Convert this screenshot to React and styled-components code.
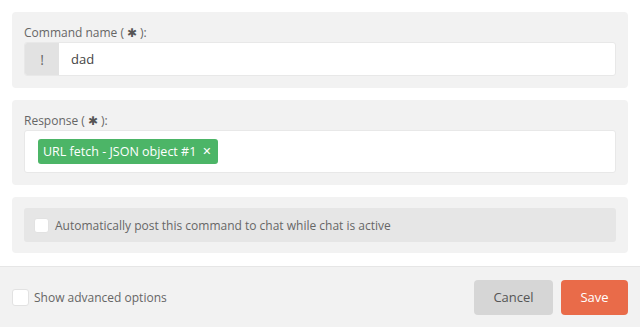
import React, {useState} from "react";
import styled, {createGlobalStyle} from "styled-components";

const GlobalStyle = createGlobalStyle`
  body {
    margin: 0;
    background: #fff;
    font-family: "Open Sans", "DejaVu Sans", sans-serif;
    color: #555;
  }
`;

const Page = styled.div`
  width: 640px;
  height: 327px;
  display: flex;
  flex-direction: column;
  overflow: hidden;
`;

const Body = styled.div`
  flex: 1;
  padding: 12px;
  display: flex;
  flex-direction: column;
  gap: 12px;
`;

const Panel = styled.div`
  background-color: #f2f2f2;
  border-radius: 4px;
  padding: ${props => props.tight ? "11px 12px" : "12px"};
`;

const Label = styled.div`
  font-size: 12px;
  line-height: 17px;
  color: #666;
`;

const Star = styled.span`
  font-family: "DejaVu Sans", sans-serif;
  font-size: 12px;
  font-weight: 700;
  color: #555;
  margin: 0 3px;
`;

const InputRow = styled.div`
  display: flex;
  height: 34px;
  background: #fff;
  border: 1px solid #e8e8e8;
  border-radius: 3px;
  box-sizing: border-box;
  overflow: hidden;
`;

const Prefix = styled.div`
  width: 34px;
  display: flex;
  align-items: center;
  justify-content: center;
  background: #e2e2e2;
  font-size: 14px;
  color: #666;
`;

const TextInput = styled.input`
  flex: 1;
  border: none;
  outline: none;
  padding: 0 12px;
  font-family: "Open Sans", sans-serif;
  font-size: 13px;
  color: #444;
  background: transparent;
`;

const TagBox = styled.div`
  height: 43px;
  box-sizing: border-box;
  background: #fff;
  border: 1px solid #e8e8e8;
  border-radius: 3px;
  padding: 8px 13px;
  display: flex;
  align-items: center;
`;

const Tag = styled.span`
  display: inline-flex;
  align-items: center;
  gap: 6px;
  height: 25px;
  padding: 0 6px 0 5px;
  border-radius: 3px;
  background: #4cb567;
  color: #fff;
  font-size: 12.5px;
`;

const TagClose = styled.span`
  font-family: "DejaVu Sans", sans-serif;
  font-size: 11px;
  font-weight: 700;
`;

const CheckRow = styled.label`
  display: flex;
  align-items: center;
  gap: 6px;
  height: 34px;
  padding: 0 10px;
  background: #e6e6e6;
  border-radius: 3px;
  font-size: 12px;
  color: #666;
  cursor: pointer;
`;

const Box = styled.span`
  width: ${props => props.size}px;
  height: ${props => props.size}px;
  box-sizing: border-box;
  background: #fff;
  border: 1px solid #e2e2e2;
  border-radius: 3px;
`;

const Footer = styled.div`
  height: 61px;
  box-sizing: border-box;
  border-top: 1px solid #e6e6e6;
  background: #f2f2f2;
  display: flex;
  align-items: center;
  justify-content: space-between;
  padding: 0 12px;
`;

const FooterCheck = styled(CheckRow)`
  padding: 0;
  gap: 5px;
  background: transparent;
`;

const Buttons = styled.div`
  display: flex;
  gap: 8px;
`;

const Button = styled.button`
  height: 35px;
  width: ${props => props.w}px;
  border: none;
  border-radius: 4px;
  font-family: "Open Sans", sans-serif;
  font-size: 13px;
  background: ${props => props.primary ? "#e96b49" : "#d6d6d6"};
  color: ${props => props.primary ? "#fff" : "#555"};
`;

export default function App() {
    const [name, setName] = useState("dad")

    return (
        <Page>
            <GlobalStyle/>
            <Body>
                <Panel>
                    <Label>Command name (<Star>✱</Star>):</Label>
                    <InputRow>
                        <Prefix>!</Prefix>
                        <TextInput value={name} onChange={e => setName(e.target.value)}/>
                    </InputRow>
                </Panel>
                <Panel>
                    <Label>Response (<Star>✱</Star>):</Label>
                    <TagBox>
                        <Tag>URL fetch - JSON object #1 <TagClose>✕</TagClose></Tag>
                    </TagBox>
                </Panel>
                <Panel tight>
                    <CheckRow>
                        <Box size={15}/>
                        Automatically post this command to chat while chat is active
                    </CheckRow>
                </Panel>
            </Body>
            <Footer>
                <FooterCheck>
                    <Box size={17}/>
                    Show advanced options
                </FooterCheck>
                <Buttons>
                    <Button w={79}>Cancel</Button>
                    <Button w={67} primary>Save</Button>
                </Buttons>
            </Footer>
        </Page>
    )
}
